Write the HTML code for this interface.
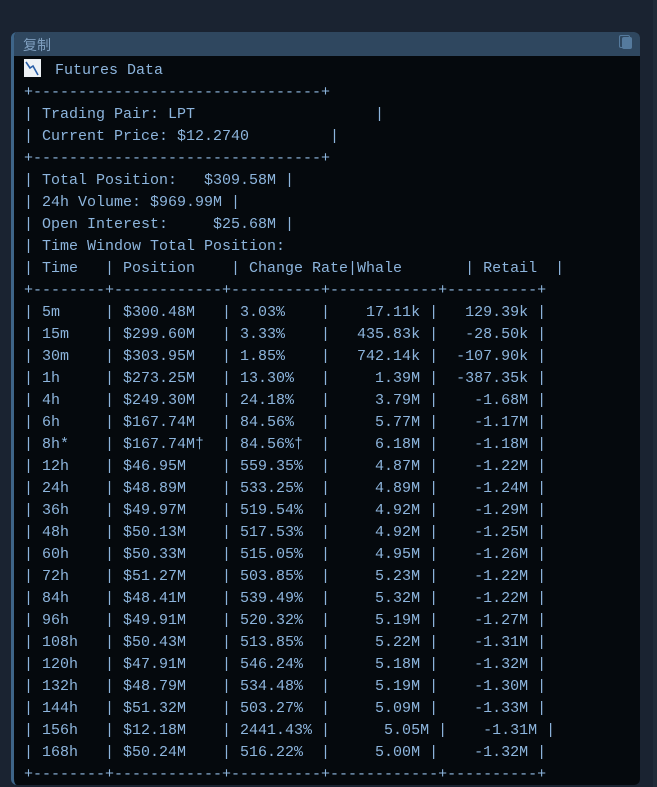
<!DOCTYPE html>
<html><head><meta charset="utf-8"><style>
html,body{margin:0;padding:0;width:657px;height:787px;overflow:hidden;background:#1a2331;}
.blk{position:absolute;left:11px;top:32px;width:629px;height:753px;background:#05090d;border-radius:6px;overflow:hidden;border-left:3px solid #3e6589;box-sizing:border-box;}
.hdr{height:24px;background:#2f475f;position:relative;}
.hdr span{position:absolute;left:9px;top:3px;font:14px "Liberation Sans","Noto Sans CJK SC",sans-serif;color:#7f9fbf;}
.cp{position:absolute;right:8px;top:5px;width:10px;height:12px;background:#5f87ad;border-radius:2px;opacity:.8}
.cp:before{content:"";position:absolute;left:-3px;top:-2px;width:9px;height:11px;border:1px solid #5f87ad;border-radius:2px;}
pre{margin:0;position:absolute;left:10px;top:27px;font:15px/22px "Liberation Mono",monospace;color:#8db5dd;}
.ic{display:inline-block;width:17px;height:18px;background:#eef2f6;vertical-align:-3px;margin-right:14px;position:relative}
.scr{position:absolute;right:0;top:0;width:4px;height:787px;background:#202b38}
</style></head><body>
<div class="scr"></div>
<div class="blk"><div class="hdr"><span>复制</span><div class="cp"></div></div>
<pre><span class="ic"><svg width="17" height="18" viewBox="0 0 17 18" style="position:absolute;left:0;top:0"><path d="M2 3 L6 9 L9 7 L14 16" stroke="#2a5fa8" stroke-width="1.6" fill="none"/></svg></span>Futures Data
+--------------------------------+
| Trading Pair: LPT                    |
| Current Price: $12.2740         |
+--------------------------------+
| Total Position:   $309.58M |
| 24h Volume: $969.99M |
| Open Interest:     $25.68M |
| Time Window Total Position:
| Time   | Position    | Change Rate|Whale       | Retail  |
+--------+------------+----------+------------+----------+
| 5m     | $300.48M   | 3.03%    |    17.11k |   129.39k |
| 15m    | $299.60M   | 3.33%    |   435.83k |   -28.50k |
| 30m    | $303.95M   | 1.85%    |   742.14k |  -107.90k |
| 1h     | $273.25M   | 13.30%   |     1.39M |  -387.35k |
| 4h     | $249.30M   | 24.18%   |     3.79M |    -1.68M |
| 6h     | $167.74M   | 84.56%   |     5.77M |    -1.17M |
| 8h*    | $167.74M†  | 84.56%†  |     6.18M |    -1.18M |
| 12h    | $46.95M    | 559.35%  |     4.87M |    -1.22M |
| 24h    | $48.89M    | 533.25%  |     4.89M |    -1.24M |
| 36h    | $49.97M    | 519.54%  |     4.92M |    -1.29M |
| 48h    | $50.13M    | 517.53%  |     4.92M |    -1.25M |
| 60h    | $50.33M    | 515.05%  |     4.95M |    -1.26M |
| 72h    | $51.27M    | 503.85%  |     5.23M |    -1.22M |
| 84h    | $48.41M    | 539.49%  |     5.32M |    -1.22M |
| 96h    | $49.91M    | 520.32%  |     5.19M |    -1.27M |
| 108h   | $50.43M    | 513.85%  |     5.22M |    -1.31M |
| 120h   | $47.91M    | 546.24%  |     5.18M |    -1.32M |
| 132h   | $48.79M    | 534.48%  |     5.19M |    -1.30M |
| 144h   | $51.32M    | 503.27%  |     5.09M |    -1.33M |
| 156h   | $12.18M    | 2441.43% |      5.05M |    -1.31M |
| 168h   | $50.24M    | 516.22%  |     5.00M |    -1.32M |
+--------+------------+----------+------------+----------+</pre>
</div>
</body></html>
